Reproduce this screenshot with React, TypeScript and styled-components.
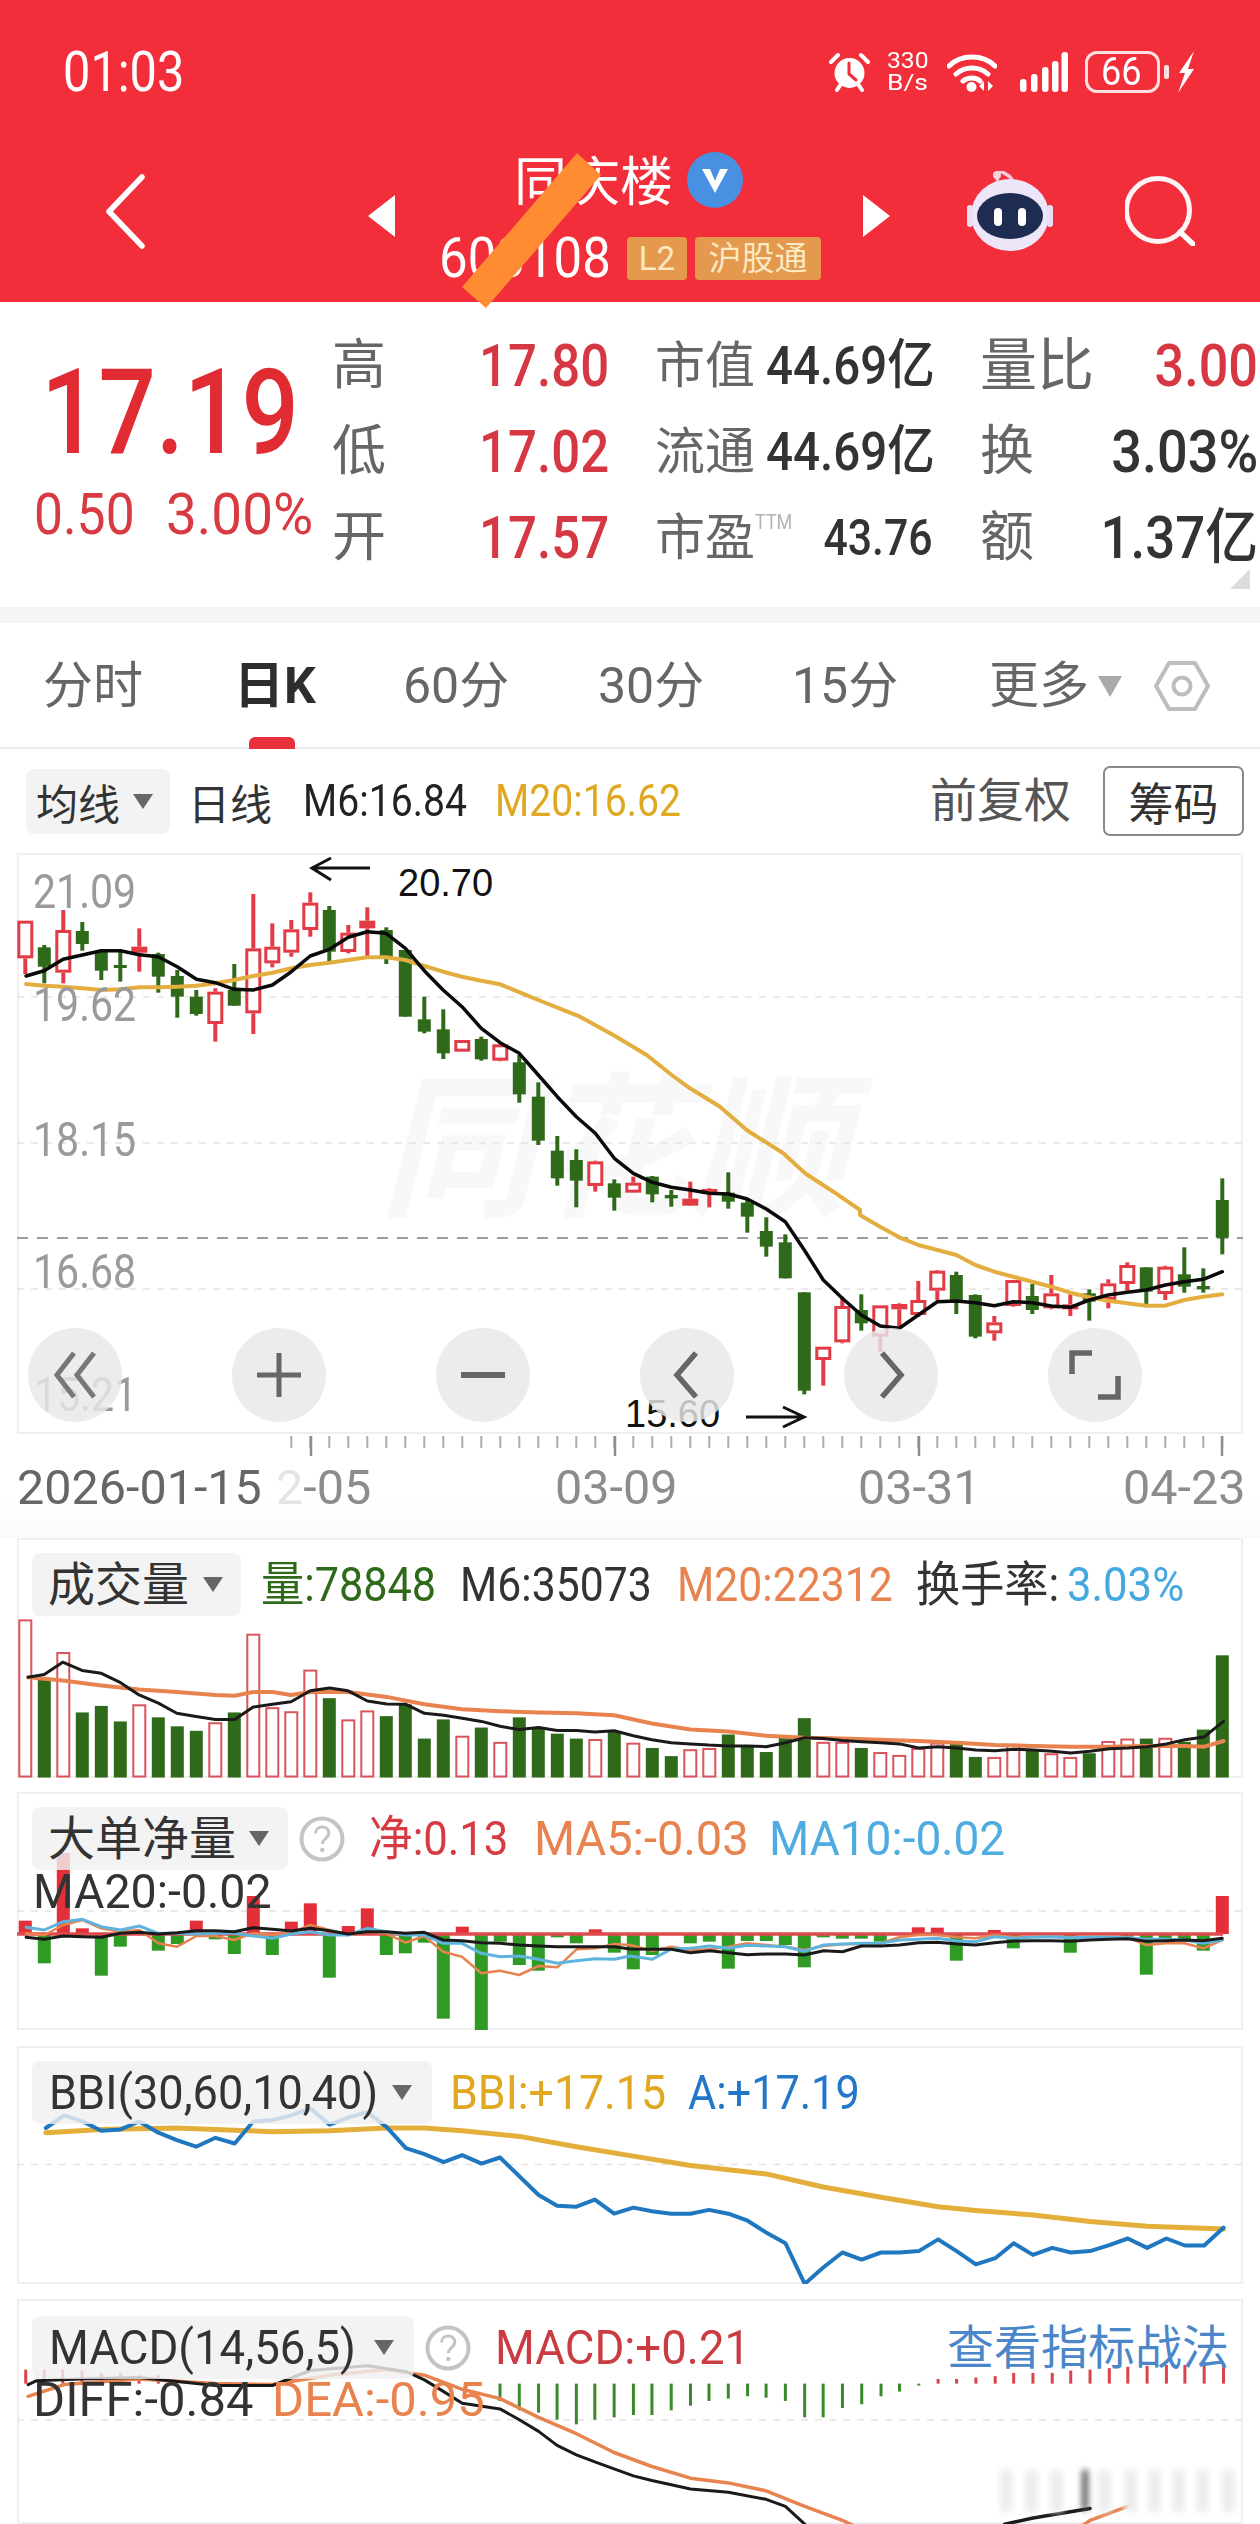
import React from 'react';
import styled, { createGlobalStyle } from 'styled-components';

const Global = createGlobalStyle`
  html, body { margin: 0; padding: 0; background: #fff; }
  body { font-family: Roboto, "Noto Sans CJK SC", sans-serif; color: #333; }
  * { box-sizing: border-box; }
`;

type P = [number, number];
const toPts = (a: P[]) => a.map(p => `${p[0].toFixed(1)},${p[1].toFixed(1)}`).join(' ');
const X = (i: number) => 25.3 + 19 * i;
const VOLX = (z: number) => z / 1.244;
const z5 = (z: number) => 1150 + z / 2.45;
const z6 = (z: number) => 1790 + z / 2.136;

/* ---------- main chart data ---------- */
type C = ['R' | 'G', number, number, number, number];
const c3: C[] = [
  ['R', 212, 372, 212, 325], ['G', 285, 400, 292, 350], ['R', 180, 400, 240, 368], ['G', 216, 302, 243, 282],
  ['G', 300, 390, 305, 362], ['G', 305, 395, 345, 353], ['R', 235, 365, 290, 308], ['G', 308, 428, 312, 380],
  ['G', 360, 503, 378, 440], ['G', 420, 497, 440, 492], ['R', 415, 575, 425, 522], ['G', 342, 467, 420, 467],
  ['R', 132, 552, 295, 490], ['R', 220, 352, 290, 340], ['R', 210, 320, 238, 308], ['R', 127, 260, 158, 240],
  ['G', 168, 335, 180, 305], ['R', 225, 310, 248, 306], ['R', 172, 325, 212, 235], ['G', 232, 342, 240, 320],
  ['G', 300, 500, 300, 500], ['G', 440, 550, 508, 545], ['G', 478, 627, 538, 610], ['R', 570, 605, 570, 605],
  ['G', 560, 632, 567, 628], ['R', 580, 634, 583, 632],
];
const c8: C[] = [
  ['G', 165, 308, 187, 283], ['G', 247, 435, 290, 422], ['G', 408, 557, 452, 535], ['G', 448, 622, 480, 542],
  ['R', 482, 575, 484, 558], ['G', 538, 632, 550, 593], ['R', 530, 578, 548, 578], ['G', 528, 607, 530, 583],
  ['G', 570, 620, 585, 595], ['R', 545, 618, 596, 617], ['R', 565, 622, 567, 580], ['G', 517, 626, 578, 605],
  ['G', 600, 698, 608, 650], ['G', 652, 770, 693, 740], ['G', 703, 835, 727, 835], ['G', 877, 1183, 877, 1172],
  ['R', 1040, 1157, 1040, 1080], ['R', 890, 1030, 918, 1027], ['G', 883, 992, 930, 970], ['R', 916, 1055, 916, 1010],
];
const c9: C[] = [
  ['R', 430, 505, 432, 448], ['R', 363, 470, 420, 465], ['R', 330, 420, 332, 392], ['G', 335, 462, 345, 422],
  ['G', 403, 535, 405, 530], ['R', 468, 542, 487, 520], ['R', 360, 440, 360, 438], ['G', 372, 462, 408, 450],
  ['R', 345, 448, 400, 445], ['R', 403, 468, 433, 445], ['G', 388, 482, 400, 425], ['R', 358, 445, 370, 420],
  ['R', 307, 392, 315, 372], ['G', 322, 432, 322, 395], ['R', 317, 420, 320, 402], ['G', 262, 398, 343, 380],
  ['G', 325, 398, 378, 388], ['G', 55, 283, 120, 233],
];
const shift = (a: C[], o: number): C[] => a.map(c => [c[0], o + c[1] / 3, o + c[2] / 3, o + c[3] / 3, o + c[4] / 3] as C);
const candles: C[] = [...shift(c3, 850), ...shift(c8, 1000), ...shift(c9, 1160)];
const RED = '#E23B46';
const GREEN = '#2F6A1B';

const ma6: P[] = [
  ...([[65,378],[110,362],[157,328],[205,315],[252,302],[300,302],[347,314],[394,320],[441,350],[489,388],[536,398],[583,418],[630,420],[678,405],[725,365],[772,318],[820,298],[867,262],[914,245],[961,250],[1009,295],[1056,362],[1103,420],[1150,470],[1198,535],[1245,578]] as P[]).map(p => [p[0] / 2.489, 850 + p[1] / 3] as P),
  ...([[118,160],[175,225],[232,290],[289,350],[346,400],[403,475],[460,520],[517,547],[574,562],[631,570],[688,580],[745,582],[802,597],[859,627],[916,665],[973,750],[1030,840],[1087,895],[1144,945],[1201,978]] as P[]).map(p => [480 + p[0] / 3, 1000 + p[1] / 3] as P),
  ...([[178,505],[235,465],[292,425],[349,423],[406,428],[463,437],[520,425],[577,428],[634,438],[691,442],[748,420],[805,405],[862,397],[919,390],[976,375],[1033,365],[1090,358],[1147,335]] as P[]).map(p => [840 + p[0] / 3, 1160 + p[1] / 3] as P),
];
const ma20: P[] = [
  ...([[65,402],[110,407],[157,410],[205,415],[252,420],[300,418],[347,412],[394,412],[441,410],[489,407],[536,400],[583,390],[630,378],[678,368],[725,355],[772,345],[820,338],[867,330],[914,322],[961,322],[1009,330],[1056,348],[1103,365],[1150,380],[1198,392],[1245,403]] as P[]).map(p => [p[0] / 2.489, 850 + p[1] / 3] as P),
  ...([[175,0],[300,50],[400,105],[500,165],[575,225],[630,265],[720,320],[800,390],[910,460],[975,520],[1060,575],[1140,630]] as P[]).map(p => [480 + p[0] / 3, 1000 + p[1] / 3] as P),
  ...([[60,165],[120,200],[178,232],[235,255],[292,270],[349,285],[406,315],[463,335],[520,350],[577,365],[634,380],[691,398],[748,412],[805,422],[862,430],[919,437],[976,437],[1033,420],[1090,410],[1147,403]] as P[]).map(p => [840 + p[0] / 3, 1160 + p[1] / 3] as P),
];

/* ---------- volume data ---------- */
const volTops = [1150,1295,1230,1378,1362,1400,1358,1390,1412,1423,1402,1378,1185,1365,1375,1273,1343,1395,1373,1387,1358,1442,1395,1435,1415,1450,1390,1418,1430,1442,1443,1425,1452,1465,1485,1468,1465,1432,1458,1475,1440,1392,1450,1450,1465,1475,1482,1465,1452,1455,1487,1487,1455,1468,1478,1487,1478,1448,1442,1442,1440,1450,1420,1238];
const volRed = new Set([0,2,6,10,12,13,14,15,17,18,23,25,30,32,35,36,42,43,45,46,47,48,51,52,54,55,57,58,60]);
const volM6: P[] = ([[35,1292],[55,1285],[78,1255],[102,1275],[126,1282],[150,1305],[173,1335],[197,1355],[220,1380],[244,1388],[268,1395],[292,1395],[315,1365],[339,1358],[362,1352],[386,1325],[410,1318],[433,1325],[457,1350],[481,1357],[505,1358],[528,1380],[552,1385],[575,1392],[599,1400],[622,1412],[646,1420],[670,1415],[693,1422],[717,1422],[740,1426],[764,1423],[788,1435],[811,1445],[835,1452],[859,1455],[882,1458],[906,1460],[930,1460],[953,1462],[977,1452],[1001,1440],[1024,1442],[1048,1447],[1072,1450],[1096,1452],[1119,1455],[1143,1465],[1167,1462],[1190,1465],[1214,1470],[1238,1472],[1261,1468],[1285,1470],[1309,1473],[1332,1477],[1356,1473],[1380,1467],[1403,1465],[1427,1462],[1451,1455],[1474,1445],[1498,1438],[1522,1400]] as P[]).map(p => [VOLX(p[0]), z5(p[1])] as P);
const volM20: P[] = ([[35,1292],[78,1300],[126,1312],[173,1322],[220,1328],[268,1335],[292,1337],[315,1328],[339,1328],[362,1335],[386,1328],[433,1328],[481,1340],[528,1358],[575,1370],[622,1375],[670,1378],[717,1380],[764,1385],[811,1405],[859,1420],[906,1425],[953,1435],[1001,1440],[1048,1442],[1096,1445],[1143,1448],[1190,1452],[1238,1458],[1285,1460],[1332,1462],[1380,1462],[1427,1460],[1474,1460],[1498,1462],[1522,1448]] as P[]).map(p => [VOLX(p[0]), z5(p[1])] as P);

/* ---------- big order data ---------- */
const BIG_ZERO = 1934;
const bigBars: [number, number][] = [
  [0,122],[1,250],[2,-81],[3,145],[4,287],[5,200],[7,212],[8,192],[9,122],[10,178],[11,222],[12,48],[13,225],[14,125],[15,70],[16,293],[17,138],[18,85],[19,225],[20,220],[21,188],[22,416],[23,140],[24,450],[25,185],[26,255],[27,272],[28,172],[29,190],[30,148],[31,218],[32,268],[33,225],[35,190],[36,185],[37,266],[38,183],[39,183],[40,195],[41,262],[42,172],[43,176],[44,176],[45,185],[47,142],[48,143],[49,242],[51,150],[52,205],[55,218],[58,170],[59,284],[60,180],[61,180],[62,212],[63,48],
];
const z10 = (a: P[]): P[] => a.map(p => [p[0] / 2.489, 1880 + p[1] / 3] as P);
const z11 = (a: P[]): P[] => a.map(p => [630 + p[0] / 2.489, 1880 + p[1] / 3] as P);
const bigBlack: P[] = [
  ...z10([[65,172],[110,178],[157,168],[205,170],[252,172],[300,160],[347,157],[394,162],[441,158],[489,152],[536,152],[583,155],[630,143],[678,148],[725,153],[772,145],[820,152],[867,162],[914,155],[961,155],[1009,160],[1056,157],[1103,180],[1150,182],[1198,188],[1245,190],[1292,195],[1340,198],[1387,200],[1435,200],[1482,200],[1529,200]]),
  ...z11([[0,207],[56,208],[103,208],[150,218],[198,212],[245,218],[292,224],[340,222],[387,222],[434,225],[482,212],[529,215],[576,198],[623,198],[671,195],[718,188],[765,187],[813,192],[860,195],[907,188],[955,183],[1002,182],[1049,182],[1096,184],[1144,180],[1191,178],[1238,176],[1285,184],[1333,182],[1380,180],[1427,182],[1474,175]]),
];
const bigBlue: P[] = [
  ...z10([[65,142],[110,150],[157,125],[205,118],[252,140],[300,150],[347,138],[394,160],[441,160],[489,162],[536,160],[583,160],[630,168],[678,175],[725,162],[772,155],[820,165],[867,165],[914,145],[961,155],[1009,165],[1056,165],[1103,190],[1150,190],[1198,220],[1245,230],[1292,228],[1340,238],[1387,250],[1435,242],[1482,236],[1529,238]]),
  ...z11([[0,228],[56,238],[103,207],[150,205],[198,198],[245,205],[292,196],[340,198],[387,200],[434,214],[482,195],[529,192],[576,190],[623,190],[671,180],[718,178],[765,175],[813,183],[860,185],[907,170],[955,175],[1002,172],[1049,170],[1096,173],[1144,172],[1191,172],[1238,173],[1285,178],[1333,178],[1380,180],[1427,190],[1474,180]]),
];
const bigOrange: P[] = [
  ...z10([[65,160],[110,165],[157,135],[205,120],[252,145],[300,155],[347,150],[394,190],[441,200],[489,168],[536,168],[583,180],[630,160],[678,165],[725,158],[772,135],[820,150],[867,165],[914,155],[961,160],[1009,188],[1056,168],[1103,215],[1150,230],[1198,280],[1245,272],[1292,285],[1340,258],[1387,262],[1435,208],[1482,205],[1529,192]]),
  ...z11([[0,195],[56,212],[103,200],[150,210],[198,208],[245,200],[292,190],[340,195],[387,200],[434,210],[482,198],[529,193],[576,192],[623,190],[671,172],[718,165],[765,165],[813,172],[860,175],[907,165],[955,172],[1002,170],[1049,170],[1096,172],[1144,170],[1191,170],[1238,172],[1285,195],[1333,190],[1380,190],[1427,205],[1474,180]]),
];

/* ---------- BBI data ---------- */
const z6p = (a: P[]): P[] => a.map(p => [VOLX(p[0]), z6(p[1])] as P);
const bbiA = z6p([[57,722],[80,695],[103,708],[126,728],[150,725],[173,708],[197,732],[220,748],[244,762],[268,743],[292,755],[315,708],[339,705],[362,695],[386,680],[410,715],[433,700],[457,688],[481,720],[505,765],[528,778],[552,795],[575,780],[599,798],[622,785],[646,825],[670,865],[693,888],[717,890],[740,875],[764,905],[788,892],[811,900],[835,905],[859,905],[882,897],[906,905],[930,920],[953,945],[977,968],[1001,1055],[1024,1020],[1048,988],[1072,1003],[1096,988],[1119,988],[1143,985],[1167,960],[1190,985],[1214,1013],[1238,1000],[1261,968],[1285,993],[1309,978],[1332,988],[1356,985],[1380,972],[1403,958],[1427,978],[1451,958],[1474,973],[1498,973],[1522,935]]);
const bbiY = z6p([[57,732],[126,725],[220,722],[268,725],[339,730],[410,728],[481,722],[528,722],[575,728],[646,740],[717,762],[788,782],[859,802],[953,820],[1024,848],[1096,870],[1167,890],[1214,898],[1285,908],[1356,922],[1427,932],[1522,938]]);

/* ---------- MACD data ---------- */
const macdBase = 1268;
const macdBars: [number, number][] = [
  [32,1238],[55,1238],[78,1238],[102,1240],[126,1245],[150,1245],[173,1250],[197,1250],[622,1305],[646,1325],[670,1330],[693,1345],[717,1355],[740,1345],[764,1340],[788,1335],[811,1335],[835,1325],[859,1315],[882,1305],[906,1300],[930,1295],[953,1298],[977,1305],[1001,1340],[1024,1340],[1048,1320],[1072,1312],[1096,1295],[1119,1285],[1143,1272],[1167,1258],[1190,1258],[1214,1255],[1238,1252],[1261,1245],[1285,1245],[1309,1245],[1332,1240],[1356,1238],[1380,1235],[1403,1232],[1427,1230],[1451,1228],[1474,1228],[1498,1228],[1522,1225],
];
const macdBlack = z6p([[35,1270],[45,1262],[100,1258],[173,1255],[268,1272],[339,1272],[386,1240],[457,1230],[505,1242],[528,1260],[552,1285],[575,1310],[622,1322],[646,1345],[670,1370],[693,1400],[717,1420],[740,1435],[764,1450],[788,1465],[811,1475],[859,1493],[906,1500],[953,1515],[977,1530],[1001,1568],[1012,1590]]);
const macdBlack2 = z6p([[1240,1590],[1250,1568],[1285,1555],[1356,1535]]);
const macdOrange = z6p([[35,1295],[80,1270],[173,1258],[268,1268],[339,1270],[410,1250],[481,1238],[528,1250],[575,1280],[622,1300],[670,1340],[717,1375],[764,1415],[811,1445],[859,1470],[906,1480],[953,1497],[1001,1530],[1048,1560],[1072,1580]]);
const macdOrange2 = z6p([[1340,1580],[1356,1560],[1403,1530]]);

/* ---------- layout ---------- */
const Page = styled.div`
  position: relative;
  width: 1260px;
  height: 2524px;
  overflow: hidden;
  background: #fff;
`;
const Header = styled.header`
  position: relative;
  height: 302px;
  background: #f32e3b;
  color: #fff;
`;
const StatusBar = styled.div`
  display: flex;
  align-items: center;
  height: 120px;
  padding: 24px 65px 0 63px;
`;
const Num = styled.span<{ $s?: number; $w?: number; $right?: boolean; $ml?: number; $c?: string; $size?: number; $wt?: number }>`
  display: inline-block;
  white-space: nowrap;
  transform: scaleX(${p => p.$s ?? 1});
  transform-origin: ${p => (p.$right ? 'right' : 'left')} center;
  ${p => (p.$w !== undefined ? `width: ${p.$w}px; flex: none;` : '')}
  ${p => (p.$ml !== undefined ? `margin-left: ${p.$ml}px;` : '')}
  ${p => (p.$c ? `color: ${p.$c};` : '')}
  ${p => (p.$size ? `font-size: ${p.$size}px;` : '')}
  ${p => (p.$wt ? `font-weight: ${p.$wt};` : '')}
`;
const Clock = styled(Num)`
  line-height: 52px;
`;
const StatusIcons = styled.div`
  margin-left: auto;
  display: flex;
  align-items: center;
  height: 44px;
`;
const StatusGlyph = styled.svg<{ $ml?: number }>`
  flex: none;
  margin-left: ${p => p.$ml ?? 0}px;
`;
const Speed = styled.div`
  width: 43px;
  margin: 0 17px;
  display: flex;
  flex-direction: column;
  align-items: flex-start;
  font-size: 22px;
  line-height: 22px;
  white-space: nowrap;
`;
const SpeedNum = styled(Num)`
  transform: scaleX(1.12);
`;
const SpeedUnit = styled(Num)`
  transform: scaleX(1.2);
`;
const Battery = styled.div`
  width: 75px;
  height: 42px;
  margin-left: 17px;
  border: 3px solid rgba(255, 255, 255, 0.85);
  border-radius: 12px;
  display: flex;
  align-items: center;
  justify-content: center;
  font-size: 38px;
  line-height: 36px;
`;
const Nav = styled.nav`
  position: absolute;
  left: 0;
  right: 0;
  top: 120px;
  height: 182px;
  display: flex;
  align-items: center;
  padding-left: 104px;
`;
const BackIcon = styled.svg`
  flex: none;
`;
const Switcher = styled.div`
  width: 522px;
  margin-left: 223px;
  display: flex;
  align-items: center;
  justify-content: space-between;
  transform: translateY(5px);
`;
const Tri = styled.div<{ $left?: boolean }>`
  width: 0;
  height: 0;
  border-top: 21px solid transparent;
  border-bottom: 21px solid transparent;
  ${p => (p.$left ? 'border-right: 27px solid #fff;' : 'border-left: 27px solid #fff;')}
`;
const TitleCol = styled.div`
  width: 468px;
  display: flex;
  flex-direction: column;
  gap: 24px;
`;
const TitleRow = styled.div`
  display: flex;
  align-items: center;
  height: 60px;
  padding-left: 119px;
`;
const Title = styled.div`
  font-size: 53px;
  line-height: 60px;
  width: 173px;
  flex: none;
  white-space: nowrap;
`;
const Badge = styled.svg`
  flex: none;
  margin-top: -6px;
`;
const CodeRow = styled.div`
  display: flex;
  align-items: center;
  height: 43px;
  padding-left: 44px;
  font-size: 56px;
  line-height: 43px;
`;
const Tag = styled.div<{ $w: number; $ml: number }>`
  width: ${p => p.$w}px;
  margin-left: ${p => p.$ml}px;
  height: 43px;
  background: #e4994e;
  border-radius: 4px;
  color: #fbe9c2;
  font-size: 33px;
  line-height: 43px;
  text-align: center;
  flex: none;
  white-space: nowrap;
`;
const Robot = styled.svg`
  margin-left: 77px;
  flex: none;
`;
const Search = styled.svg`
  margin-left: 72px;
  flex: none;
`;
const Slash = styled.svg`
  position: absolute;
  left: 455px;
  top: 148px;
  z-index: 3;
`;

const Quote = styled.section`
  height: 305px;
  display: flex;
  position: relative;
`;
const Price = styled.div`
  width: 332px;
  padding: 53px 0 0 41px;
  color: #e02b33;
`;
const Big = styled(Num)`
  display: block;
  font-size: 119px;
  line-height: 116px;
  font-weight: 500;
  transform: scaleX(0.85);
`;
const Change = styled.div`
  display: flex;
  margin: 20px 0 0 -7px;
  font-size: 58px;
  line-height: 46px;
  color: #d83a42;
`;
const QuoteGrid = styled.div`
  padding-top: 21px;
  display: grid;
  grid-template-columns: 147px 176px 111px 214px 110px 170px;
  grid-auto-rows: 86px;
  align-items: center;
`;
const Label = styled.div<{ $size?: number }>`
  font-size: ${p => p.$size ?? 50}px;
  line-height: 60px;
  color: #666;
  white-space: nowrap;
  display: flex;
`;
const Sup = styled.span`
  font-size: 20px;
  color: #b3b3b3;
  line-height: 24px;
  margin-top: 2px;
  transform: scaleX(0.9);
  transform-origin: left;
`;
const RedVal = styled(Num)`
  color: #d63843;
  font-size: 60px;
  font-weight: 500;
  line-height: 60px;
  transform: scaleX(${p => p.$s ?? 0.85});
`;
const DarkVal = styled(Num)`
  color: #333;
  font-weight: 500;
  line-height: 60px;
  justify-self: ${p => (p.$right ? 'end' : 'start')};
`;
const RightCell = styled.div<{ $pr?: number }>`
  display: flex;
  justify-content: flex-end;
  padding-right: ${p => p.$pr ?? 47}px;
`;
const CornerMark = styled.svg`
  position: absolute;
  left: 1230px;
  top: 267px;
`;
const Band = styled.div`
  height: 16px;
  background: #f5f5f5;
`;
const Tabs = styled.div`
  height: 126px;
  display: grid;
  grid-template-columns: 191px 169px 195px 194px 197px 109px 56px 56px;
  align-items: center;
  padding-left: 43px;
  border-bottom: 2px solid #ececec;
`;
const Tab = styled.div<{ $active?: boolean }>`
  position: relative;
  height: 126px;
  display: flex;
  align-items: center;
  font-size: 50px;
  line-height: 60px;
  white-space: nowrap;
  color: ${p => (p.$active ? '#2d2d2d' : '#666')};
  font-weight: ${p => (p.$active ? 700 : 400)};
  ${p =>
    p.$active
      ? `&::after { content: ''; position: absolute; left: 15px; bottom: 0; width: 46px; height: 12px; border-radius: 6px 6px 0 0; background: #e8303c; }`
      : ''}
`;
const Toolbar = styled.div`
  height: 104px;
  display: flex;
  align-items: center;
  padding-left: 26px;
  font-size: 42px;
  position: relative;
`;
const SelectBtn = styled.div<{ $w: number; $h?: number; $size?: number; $pl?: number }>`
  width: ${p => p.$w}px;
  height: ${p => p.$h ?? 63}px;
  flex: none;
  background: rgba(240, 240, 240, 0.82);
  border-radius: 8px;
  display: flex;
  align-items: center;
  padding-left: ${p => p.$pl ?? 16}px;
  position: relative;
  font-size: ${p => p.$size ?? 47}px;
  color: #333;
  white-space: nowrap;
`;
const Caret = styled.div<{ $ml: number }>`
  width: 0;
  height: 0;
  flex: none;
  margin-left: ${p => p.$ml}px;
  border-left: 10.5px solid transparent;
  border-right: 10.5px solid transparent;
  border-top: 15px solid #666;
`;
const Adjust = styled.div`
  position: absolute;
  left: 930px;
  top: 22px;
  font-size: 47px;
  line-height: 60px;
  color: #555;
  white-space: nowrap;
`;
const OutlineBtn = styled.div`
  margin-left: auto;
  margin-right: 16px;
  width: 141px;
  height: 70px;
  border: 2px solid #8a8a8a;
  border-radius: 7px;
  display: flex;
  align-items: center;
  justify-content: center;
  font-size: 45px;
  color: #333;
`;
const Chart = styled.div`
  position: relative;
  margin-left: 17px;
  width: 1226px;
  height: 581px;
  box-shadow: inset 0 0 0 2px #efefef;
  overflow: hidden;
`;
const Watermark = styled.div`
  position: absolute;
  left: 362px;
  top: 208px;
  font-size: 156px;
  line-height: 180px;
  font-weight: 700;
  font-style: italic;
  color: #f8f8f8;
  white-space: nowrap;
`;
const Layer = styled.svg`
  position: absolute;
  left: 0;
  top: 0;
  display: block;
`;
const Smear = styled.rect`
  filter: blur(3px);
`;
const AxisLabel = styled.div<{ $top: number; $left: number }>`
  position: absolute;
  left: ${p => p.$left}px;
  top: ${p => p.$top}px;
  font-size: 48px;
  line-height: 46px;
  color: #9a9a9a;
  transform: scaleX(0.855);
  transform-origin: left;
  white-space: nowrap;
`;
const Note = styled.div<{ $top: number; $left: number; $s?: number }>`
  position: absolute;
  left: ${p => p.$left}px;
  top: ${p => p.$top}px;
  font-family: "Liberation Sans", sans-serif;
  font-size: 38px;
  line-height: 40px;
  color: #111;
  transform: scaleX(${p => p.$s ?? 1});
  transform-origin: left;
  white-space: nowrap;
`;
const Controls = styled.div`
  position: absolute;
  left: 11px;
  top: 475px;
  display: flex;
  gap: 110px;
`;
const Round = styled.div`
  width: 94px;
  height: 94px;
  border-radius: 50%;
  background: rgba(232, 232, 232, 0.82);
  display: flex;
  align-items: center;
  justify-content: center;
`;
const DateAxis = styled.div`
  height: 104px;
  position: relative;
  background: linear-gradient(#fff 62%, #fafafa);
`;
const DateRow = styled.div`
  position: absolute;
  left: 17px;
  top: 34px;
  display: grid;
  grid-template-columns: 259px 279px 303px 265px 130px;
  font-size: 48px;
  line-height: 40px;
  color: #8c8c8c;
`;
const DateText = styled(Num)`
  transform: scaleX(1.01);
`;
const Faded = styled.span`
  color: #e4e4e4;
`;
const Panel = styled.section<{ $h: number; $mb?: number }>`
  position: relative;
  margin-left: 17px;
  width: 1226px;
  height: ${p => p.$h}px;
  margin-bottom: ${p => p.$mb ?? 0}px;
  box-shadow: inset 0 0 0 2px #efefef;
  overflow: hidden;
`;
const Legend = styled.div<{ $pt?: number }>`
  position: relative;
  display: flex;
  align-items: center;
  padding: ${p => p.$pt ?? 15}px 0 0 15px;
  font-size: 48px;
  line-height: 63px;
  color: #333;
`;
const SecondLegend = styled.div<{ $mt?: number }>`
  position: relative;
  display: flex;
  align-items: center;
  padding-left: 16px;
  height: 46px;
  margin-top: ${p => p.$mt ?? -1}px;
  font-size: 48px;
  line-height: 46px;
  color: #333;
`;
const Help = styled.svg`
  flex: none;
  margin-left: 11px;
`;
const Dash = ({ y, x1 = 17, x2 = 1243, c = '#e4e4e4', d = '7 7', w = 1.5 }: { y: number; x1?: number; x2?: number; c?: string; d?: string; w?: number }) => (
  <line x1={x1} x2={x2} y1={y} y2={y} stroke={c} strokeWidth={w} strokeDasharray={d} />
);
const Line = ({ p, c, w = 3, o = 1 }: { p: P[]; c: string; w?: number; o?: number }) => (
  <polyline points={toPts(p)} fill="none" stroke={c} strokeWidth={w} strokeLinejoin="round" strokeLinecap="round" opacity={o} />
);
const HelpIcon = () => (
  <Help width="46" height="46" viewBox="0 0 46 46">
    <circle cx="23" cy="23" r="20.5" fill="none" stroke="#c4c4c4" strokeWidth="4" />
    <path d="M16.5 17.5c0-4 3-6.5 6.8-6.5s6.5 2.5 6.5 6c0 5.5-6.5 5.8-6.5 11" fill="none" stroke="#c4c4c4" strokeWidth="3" />
    <circle cx="23.3" cy="34" r="2.2" fill="#c4c4c4" />
  </Help>
);

const App: React.FC = () => (
  <Page>
    <Global />
    <Header>
      <StatusBar>
        <Clock $s={0.87} $size={56}>01:03</Clock>
        <StatusIcons>
          <svg width="41" height="40" viewBox="0 0 41 40" fill="#fff">
            <circle cx="20.5" cy="21" r="15" fill="#fff" />
            <path d="M20 11v11l7 6" fill="none" stroke="#f32e3b" strokeWidth="3" strokeLinecap="round" />
            <path d="M2 10 9 3M39 10 32 3" fill="none" stroke="#fff" strokeWidth="4" strokeLinecap="round" />
            <path d="M8 38l4-6M33 38l-4-6" fill="none" stroke="#fff" strokeWidth="4" strokeLinecap="round" />
          </svg>
          <Speed>
            <SpeedNum>330</SpeedNum>
            <SpeedUnit>B/s</SpeedUnit>
          </Speed>
          <svg width="50" height="40" viewBox="0 0 50 40">
            <path d="M2 14C14 2 36 2 48 14M9 22c9-8 23-8 32 0M16 29c5-4 13-4 17 0" fill="none" stroke="#fff" strokeWidth="5" strokeLinecap="round" />
            <circle cx="24.5" cy="35" r="5" fill="#fff" />
            <path d="M37 29v10l-5-5zM41 29v10l5-5z" fill="#fff" />
          </svg>
          <StatusGlyph $ml={23} width="48" height="40" viewBox="0 0 48 40" fill="#fff">
            <rect x="0" y="27" width="6.5" height="13" rx="3" />
            <rect x="11" y="22" width="6.5" height="18" rx="3" />
            <rect x="22" y="15" width="6.5" height="25" rx="3" />
            <rect x="32" y="9" width="6.5" height="31" rx="3" />
            <rect x="41.5" y="0" width="6.5" height="40" rx="3" />
          </StatusGlyph>
          <Battery><Num $s={0.95}>66</Num></Battery>
          <StatusGlyph $ml={3} width="8" height="14" viewBox="0 0 8 14">
            <rect x="1" y="0" width="5" height="14" rx="2" fill="#fff" opacity=".85" />
          </StatusGlyph>
          <StatusGlyph $ml={6} width="18" height="42" viewBox="0 0 18 42">
            <path d="M17 0 2 22h6L1 42l16-24h-6z" fill="#fff" />
          </StatusGlyph>
        </StatusIcons>
      </StatusBar>
      <Nav>
        <BackIcon width="41" height="75" viewBox="0 0 41 75">
          <path d="M38 3 5 37.5 38 72" fill="none" stroke="#fff" strokeWidth="5.5" strokeLinecap="round" strokeLinejoin="round" />
        </BackIcon>
        <Switcher>
          <Tri $left />
          <TitleCol>
            <TitleRow>
              <Title>同庆楼</Title>
              <Badge width="56" height="60" viewBox="0 0 56 60">
                <circle cx="28" cy="30" r="28" fill="#4a90e2" />
                <path d="M15 19l13 24 13-24h-8l-5 12-5-12z" fill="#fff" />
              </Badge>
            </TitleRow>
            <CodeRow>
              <Num $s={0.91} $w={170}>603108</Num>
              <Tag $w={60} $ml={18}>L2</Tag>
              <Tag $w={126} $ml={8}>沪股通</Tag>
            </CodeRow>
          </TitleCol>
          <Tri />
        </Switcher>
        <Robot width="86" height="80" viewBox="0 0 86 80">
          <path d="M31 10C27 2 33-1 37 2c3 2 6 2 8 7" fill="none" stroke="#f0c8d8" strokeWidth="3.5" />
          <circle cx="30" cy="4" r="4" fill="#f5d5dd" />
          <ellipse cx="43" cy="44" rx="39" ry="36" fill="#ece6f8" />
          <rect x="0" y="34" width="6" height="22" rx="3" fill="#e6e0f4" />
          <rect x="80" y="34" width="6" height="22" rx="3" fill="#e6e0f4" />
          <ellipse cx="43" cy="45" rx="33" ry="23" fill="#1d2c50" />
          <rect x="27" y="37" width="8" height="18" rx="4" fill="#fff" />
          <rect x="51" y="37" width="8" height="18" rx="4" fill="#fff" />
        </Robot>
        <Search width="70" height="70" viewBox="0 0 70 70">
          <circle cx="33" cy="34" r="31.5" fill="none" stroke="#fff" strokeWidth="5" opacity=".95" />
          <path d="M55 56 68 68" stroke="#fff" strokeWidth="5.5" strokeLinecap="round" />
        </Search>
      </Nav>
      <Slash width="150" height="165" viewBox="0 0 150 165">
        <polygon points="122,5 146,27 31,160 7,139" fill="#ff8c32" />
      </Slash>
    </Header>

    <Quote>
      <Price>
        <Big>17.19</Big>
        <Change>
          <Num $s={0.89} $w={132}>0.50</Num>
          <Num $s={0.946}>3.00%</Num>
        </Change>
      </Price>
      <QuoteGrid>
        <Label $size={54}>高</Label>
        <RedVal>17.80</RedVal>
        <Label>市值</Label>
        <DarkVal $s={0.88} $size={54}>44.69亿</DarkVal>
        <Label $size={57}>量比</Label>
        <RightCell $pr={2}><RedVal $right $s={0.87}>3.00</RedVal></RightCell>

        <Label $size={54}>低</Label>
        <RedVal>17.02</RedVal>
        <Label>流通</Label>
        <DarkVal $s={0.88} $size={54}>44.69亿</DarkVal>
        <Label $size={54}>换</Label>
        <RightCell $pr={2}><DarkVal $s={0.9} $right $size={60}>3.03%</DarkVal></RightCell>

        <Label $size={54}>开</Label>
        <RedVal>17.57</RedVal>
        <Label>市盈<Sup>TTM</Sup></Label>
        <RightCell><DarkVal $s={0.855} $right $size={50}>43.76</DarkVal></RightCell>
        <Label $size={54}>额</Label>
        <RightCell $pr={2}><DarkVal $s={0.88} $right $size={60}>1.37亿</DarkVal></RightCell>
      </QuoteGrid>
      <CornerMark width="20" height="20" viewBox="0 0 20 20"><polygon points="20,0 20,20 0,20" fill="#dcdcdc" /></CornerMark>
    </Quote>
    <Band />
    <Tabs>
      <Tab>分时</Tab>
      <Tab $active>日K</Tab>
      <Tab>60分</Tab>
      <Tab>30分</Tab>
      <Tab>15分</Tab>
      <Tab>更多</Tab>
      <Tab>
        <svg width="24" height="21" viewBox="0 0 24 21"><polygon points="0,0 24,0 12,21" fill="#aaa" /></svg>
      </Tab>
      <Tab>
        <svg width="56" height="52" viewBox="0 0 56 52">
          <polygon points="15,3 41,3 54,26 41,49 15,49 2,26" fill="none" stroke="#bdbdbd" strokeWidth="4" strokeLinejoin="round" />
          <circle cx="28" cy="26" r="8.5" fill="none" stroke="#bdbdbd" strokeWidth="4" />
        </svg>
      </Tab>
    </Tabs>
    <Toolbar>
      <SelectBtn $w={144} $h={65} $size={42} $pl={10}>
        均线<Caret $ml={13} />
      </SelectBtn>
      <Num $ml={18} $w={115}>日线</Num>
      <Num $s={0.89} $w={192} $size={44} $c="#222">M6:16.84</Num>
      <Num $s={0.89} $size={44} $c="#e0a820">M20:16.62</Num>
      <Adjust>前复权</Adjust>
      <OutlineBtn>筹码</OutlineBtn>
    </Toolbar>
    <Chart>
      <Watermark>同花顺</Watermark>
      <Layer width="1226" height="581" viewBox="17 853 1226 581">
        <Dash y={997} />
        <Dash y={1143} />
        <Dash y={1289} />
        <Dash y={1238} c="#9c9c9c" d="11 9" w={2} />
        {candles.map((c, i) => {
          const [t, wt, wb, bt, bb] = c;
          const x = X(i);
          if (t === 'G') {
            return (
              <g key={i}>
                <line x1={x} x2={x} y1={wt} y2={wb} stroke={GREEN} strokeWidth="4" />
                <rect x={x - 6.5} y={bt} width="13" height={Math.max(bb - bt, 3)} fill={GREEN} />
              </g>
            );
          }
          const thin = bb - bt < 9;
          return (
            <g key={i}>
              <line x1={x} x2={x} y1={wt} y2={bt} stroke={RED} strokeWidth="4" />
              <line x1={x} x2={x} y1={bb} y2={wb} stroke={RED} strokeWidth="4" />
              <rect x={x - 6.5} y={bt + 1.5} width="13" height={Math.max(bb - bt - 3, 2)} fill={thin ? RED : '#fff'} stroke={RED} strokeWidth="3" />
            </g>
          );
        })}
        <Line p={ma20} c="#e3ae3f" w={4} />
        <Line p={ma6} c="#0a0a0a" w={3.5} />
        <path d="M370 868H313M331 858 312 868 331 880" fill="none" stroke="#111" strokeWidth="3" />
        <path d="M746 1417H803M783 1407 804 1417 783 1427" fill="none" stroke="#111" strokeWidth="3" />
      </Layer>
      <AxisLabel $left={16} $top={16}>21.09</AxisLabel>
      <AxisLabel $left={16} $top={129}>19.62</AxisLabel>
      <AxisLabel $left={16} $top={264}>18.15</AxisLabel>
      <AxisLabel $left={16} $top={396}>16.68</AxisLabel>
      <AxisLabel $left={17} $top={519}>15.21</AxisLabel>
      <Note $left={381} $top={10}>20.70</Note>
      <Note $left={608} $top={541}>15.60</Note>
      <Controls>
        <Round>
          <svg width="50" height="50" viewBox="0 0 50 50"><path d="M24 3 7 25l17 22M44 3 27 25l17 22" fill="none" stroke="#777" strokeWidth="5" /></svg>
        </Round>
        <Round>
          <svg width="46" height="46" viewBox="0 0 46 46"><path d="M23 1v44M1 23h44" fill="none" stroke="#666" strokeWidth="5" /></svg>
        </Round>
        <Round>
          <svg width="46" height="46" viewBox="0 0 46 46"><path d="M1 23h44" fill="none" stroke="#666" strokeWidth="6" /></svg>
        </Round>
        <Round>
          <svg width="32" height="50" viewBox="0 0 32 50"><path d="M25 3 6 25l19 22" fill="none" stroke="#666" strokeWidth="5.5" /></svg>
        </Round>
        <Round>
          <svg width="32" height="50" viewBox="0 0 32 50"><path d="M7 3l19 22L7 47" fill="none" stroke="#666" strokeWidth="5.5" /></svg>
        </Round>
        <Round>
          <svg width="52" height="52" viewBox="0 0 52 52"><path d="M3 25V4h20M49 27v21H29" fill="none" stroke="#666" strokeWidth="5.5" /></svg>
        </Round>
      </Controls>
    </Chart>
    <DateAxis>
      <Layer width="1260" height="30" viewBox="0 0 1260 30">
        {Array.from({ length: 50 }, (_, i) => (
          <line key={i} x1={X(14) + i * 19} x2={X(14) + i * 19} y1="2" y2="14" stroke="#adadad" strokeWidth="2" />
        ))}
        {[311, 615, 919, 1222].map(x => (
          <line key={x} x1={x} x2={x} y1="2" y2="22" stroke="#8e8e8e" strokeWidth="2.5" />
        ))}
      </Layer>
      <DateRow>
        <DateText $c="#666">2026-01-15</DateText>
        <DateText><Faded>2</Faded>-05</DateText>
        <DateText>03-09</DateText>
        <DateText>03-31</DateText>
        <DateText>04-23</DateText>
      </DateRow>
    </DateAxis>

    <Panel $h={240} $mb={14}>
      <Layer width="1226" height="240" viewBox="17 1538 1226 240">
        {volTops.map((t, i) => {
          const y = z5(t);
          const x = X(i);
          return volRed.has(i)
            ? <rect key={i} x={x - 6} y={y + 1} width="12" height={z5(1535) - y - 1} fill="#fff" stroke="#d9545c" strokeWidth="2" />
            : <rect key={i} x={x - 6.5} y={y} width="13" height={z5(1535) - y + 1} fill={GREEN} />;
        })}
        <Line p={volM20} c="#e8834f" w={4} />
        <Line p={volM6} c="#1a1a1a" w={3} />
      </Layer>
      <Legend>
        <SelectBtn $w={209}>成交量<Caret $ml={14} /></SelectBtn>
        <Num $ml={20} $w={175} $s={0.9} $c={GREEN}>量:78848</Num>
        <Num $ml={24} $w={191} $s={0.89}>M6:35073</Num>
        <Num $ml={26} $w={215} $s={0.89} $c="#e8834f">M20:22312</Num>
        <Num $ml={24} $w={149} $s={0.92}>换手率:</Num>
        <Num $ml={2} $s={0.91} $c="#45a8e0">3.03%</Num>
      </Legend>
    </Panel>

    <Panel $h={238} $mb={16}>
      <Layer width="1226" height="238" viewBox="17 1792 1226 238">
        <Dash y={1911} />
        {bigBars.map(([i, t]) => {
          const y = 1880 + t / 3;
          const up = y < BIG_ZERO;
          return up
            ? <rect key={i} x={X(i) - 6.5} y={i === 2 ? 1853 : y} width="13" height={BIG_ZERO - (i === 2 ? 1853 : y)} fill="#e22f38" />
            : <rect key={i} x={X(i) - 6.5} y={BIG_ZERO} width="13" height={y - BIG_ZERO} fill="#2f9a24" />;
        })}
        <line x1="17" x2="1223" y1={BIG_ZERO} y2={BIG_ZERO} stroke="#df4a4c" strokeWidth="3.5" />
        <Line p={bigOrange} c="#e8834f" w={2.5} />
        <Line p={bigBlue} c="#5fb4de" w={3} />
        <Line p={bigBlack} c="#1a1a1a" w={3} />
      </Layer>
      <Legend>
        <SelectBtn $w={256}>大单净量<Caret $ml={13} /></SelectBtn>
        <HelpIcon />
        <Num $ml={24} $w={139} $s={0.91} $c="#d83a42">净:0.13</Num>
        <Num $ml={26} $w={213} $s={0.98} $c="#e8834f">MA5:-0.03</Num>
        <Num $ml={22} $s={0.96} $c="#4facE0">MA10:-0.02</Num>
      </Legend>
      <SecondLegend>
        <Num $s={0.97}>MA20:-0.02</Num>
      </SecondLegend>
    </Panel>

    <Panel $h={238} $mb={15}>
      <Layer width="1226" height="238" viewBox="17 2046 1226 238">
        <Dash y={2164.5} />
        <Line p={bbiY} c="#e3ae3a" w={5} />
        <Line p={bbiA} c="#1f77c0" w={4} />
      </Layer>
      <Legend>
        <SelectBtn $w={400} $pl={17}>
          <Num $s={0.94} $w={327} $size={48}>BBI(30,60,10,40)</Num><Caret $ml={16} />
        </SelectBtn>
        <Num $ml={18} $w={215} $s={0.93} $c="#e0a820">BBI:+17.15</Num>
        <Num $ml={23} $s={0.9} $c="#2277c8">A:+17.19</Num>
      </Legend>
    </Panel>

    <Panel $h={225}>
      <Layer width="1226" height="225" viewBox="17 2299 1226 225">
        <Dash y={z6(1345)} />
        {macdBars.map(([zx, zy]) => {
          const up = zy < macdBase;
          return (
            <line key={zx} x1={VOLX(zx)} x2={VOLX(zx)} y1={z6(macdBase)} y2={z6(zy)} stroke={up ? '#d9434c' : '#3a8a2a'} strokeWidth="3" />
          );
        })}
        <Line p={macdOrange} c="#e8834f" w={3.5} />
        <Line p={macdBlack} c="#1a1a1a" w={3} />
        <Line p={macdOrange2} c="#e8834f" w={3.5} />
        <Line p={macdBlack2} c="#1a1a1a" w={3.5} />
        {[1000, 1025, 1050, 1098, 1124, 1148, 1172, 1196, 1222].map(x => (
          <Smear key={x} x={x} y="2470" width="13" height="42" fill="#ededed" />
        ))}
        <Smear x="1082" y="2470" width="6" height="40" fill="#555" />
      </Layer>
      <Legend $pt={17}>
        <SelectBtn $w={382} $pl={17}>
          <Num $s={0.95} $w={309} $size={48}>MACD(14,56,5)</Num><Caret $ml={16} />
        </SelectBtn>
        <HelpIcon />
        <Num $ml={24} $w={255} $s={0.95} $c="#c93c42">MACD:+0.21</Num>
        <Num $ml={197} $size={47} $c="#4a86c8">查看指标战法</Num>
      </Legend>
      <SecondLegend $mt={-2}>
        <Num $s={1.02} $w={239}>DIFF:-0.84</Num>
        <Num $s={1.02} $c="#e8834f">DEA:-0.95</Num>
      </SecondLegend>
    </Panel>
  </Page>
);

export default App;
